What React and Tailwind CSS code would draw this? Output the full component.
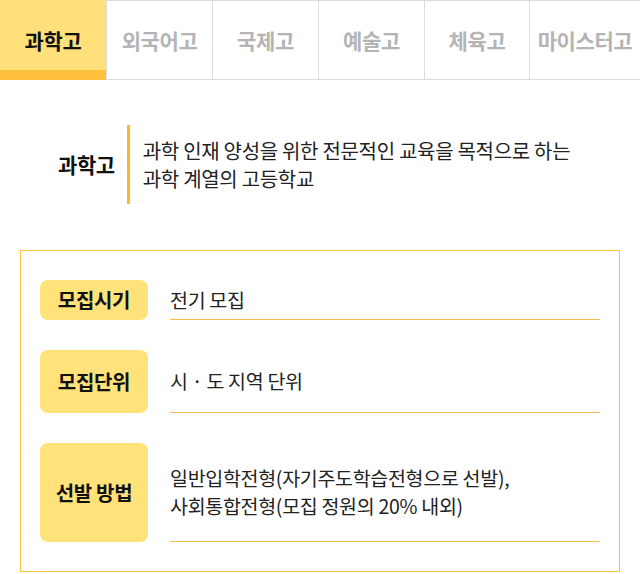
import React from 'react'

const tabs = ['과학고', '외국어고', '국제고', '예술고', '체육고', '마이스터고']

const rows = [
  { label: '모집시기', h: 'h-[40px]', lines: ['전기 모집'] },
  { label: '모집단위', h: 'h-[63px]', lines: ['시 · 도 지역 단위'] },
  {
    label: '선발 방법',
    h: 'h-[99px]',
    lines: ['일반입학전형(자기주도학습전형으로 선발),', '사회통합전형(모집 정원의 20% 내외)'],
  },
]

function App() {
  return (
    <div className="w-[640px] h-[574px] bg-white font-['Noto_Sans_CJK_KR','Noto_Sans',sans-serif] text-[#222] overflow-hidden">
      {/* school type tabs */}
      <div className="grid grid-cols-[106px_106px_106px_106px_105px_1fr] h-[80px]">
        {tabs.map((t, i) =>
          i === 0 ? (
            <div
              key={t}
              className="flex items-center justify-center pt-[12px] bg-[#ffe07a] border-b-[10px] border-[#ffc13d] text-[21px] font-bold text-[#111] tracking-[-0.4px]"
            >
              {t}
            </div>
          ) : (
            <div
              key={t}
              className="flex items-center justify-center pt-[2px] border-t border-b border-l border-[#dcdcdc] text-[21px] font-bold text-[#b4b4b4] tracking-[-0.4px] whitespace-nowrap"
            >
              {t}
            </div>
          )
        )}
      </div>

      {/* intro */}
      <div className="flex items-center mt-[45px]">
        <div className="ml-[58px] text-[21px] font-bold tracking-[-0.4px] text-[#111]">과학고</div>
        <div className="ml-[12px] w-[3px] h-[79px] bg-[#fbb829]" />
        <p className="ml-[13px] text-[20px] leading-[28px] tracking-[-0.3px] whitespace-nowrap">
          과학 인재 양성을 위한 전문적인 교육을 목적으로 하는
          <br />
          과학 계열의 고등학교
        </p>
      </div>

      {/* info box */}
      <div className="mx-[20px] mt-[46px] border border-[#fcc23a] pt-[29px] pb-[29px] pl-[19px] pr-[19px] flex flex-col gap-[30px]">
        {rows.map((r) => (
          <div key={r.label} className={`flex ${r.h}`}>
            <div className="w-[108px] shrink-0 rounded-[8px] bg-[#ffe27a] flex items-center justify-center text-[20px] font-bold text-[#111] tracking-[-0.3px] whitespace-nowrap">
              {r.label}
            </div>
            <div className="ml-[22px] flex-1 border-b border-[#f4bd4d] flex flex-col justify-center text-[19.5px] leading-[28px] tracking-[-0.3px] whitespace-nowrap">
              {r.lines.map((l) => (
                <span key={l}>{l}</span>
              ))}
            </div>
          </div>
        ))}
      </div>
    </div>
  )
}

export default App
